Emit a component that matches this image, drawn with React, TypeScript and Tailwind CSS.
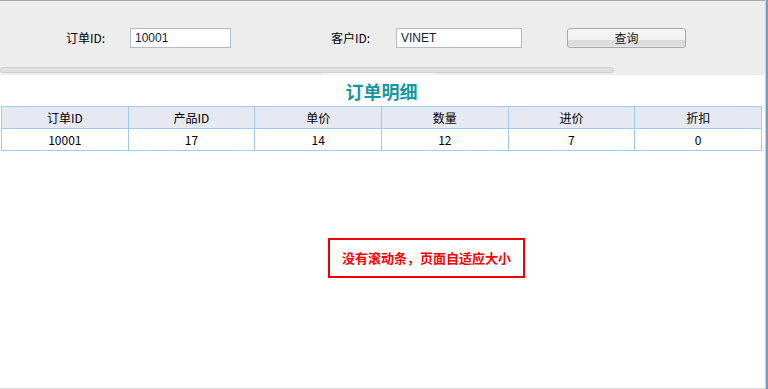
import React from "react";

const cjk = { fontFamily: '"Noto Sans CJK SC", "Noto Sans", sans-serif' };
const latin = { fontFamily: '"Liberation Sans", Arial, sans-serif' };

const headers = ["订单ID", "产品ID", "单价", "数量", "进价", "折扣"];
const row = ["10001", "17", "14", "12", "7", "0"];

export default function App() {
  return (
    <div className="w-[768px] h-[389px] overflow-hidden flex bg-white" style={cjk}>
      <div className="w-[765px] h-full flex flex-col">
        <div className="h-[1px] bg-[#a8a8a8]" />
        <div className="h-[74px] bg-[#ededed] flex flex-col">
          <div className="flex items-center h-[20px] mt-[27px]">
            <div className="ml-[66px] w-[64px] text-[12px] leading-none text-black">订单ID:</div>
            <div
              className="w-[101px] h-[20px] bg-white border border-[#b3b9cf] flex items-center pl-[4px] text-[12px] text-[#1a1a40]"
              style={latin}
            >
              10001
            </div>
            <div className="ml-[100px] w-[65px] text-[12px] leading-none text-black">客户ID:</div>
            <div
              className="w-[126px] h-[20px] bg-white border border-[#b3b9cf] flex items-center pl-[4px] text-[12px] text-[#1a1a40]"
              style={latin}
            >
              VINET
            </div>
            <div className="ml-[45px] w-[119px] h-[20px] rounded-[3px] border border-[#a9a9a9] bg-[linear-gradient(to_bottom,#f7f7f7_0%,#f2f2f2_60%,#dcdcdc_62%,#dcdcdc_90%,#ececec_100%)] flex items-center justify-center text-[12px] text-[#222]">
              查询
            </div>
          </div>
          <div className="mt-[19px] w-[614px] h-[6px] rounded-[3px] bg-[#e0e0e0] border border-[#cfcfcf]" />
          <div className="ml-[323px] w-[112px] h-[1px] bg-white mt-[0px]" />
        </div>
        <div className="flex-1 flex flex-col">
          <div className="w-[763px] mt-[4px] h-[24px] flex items-center justify-center text-[18px] font-bold text-[#1598a0] leading-none">
            订单明细
          </div>
          <table className="ml-[1px] mt-[3px] w-[761px] border-collapse table-fixed text-[12px] text-black">
            <thead>
              <tr className="h-[22px] bg-[#e6e9f1]">
                {headers.map((h) => (
                  <th key={h} className="border border-[#9fcbf5] font-normal text-center p-0 leading-none">
                    {h}
                  </th>
                ))}
              </tr>
            </thead>
            <tbody>
              <tr className="h-[22px]">
                {row.map((c, i) => (
                  <td key={i} className="border border-[#9fcbf5] text-center p-0 leading-none">
                    {c}
                  </td>
                ))}
              </tr>
            </tbody>
          </table>
          <div className="ml-[328px] mt-[87px] w-[197px] h-[40px] border-2 border-[#ee0000] flex items-center justify-center text-[13px] font-bold text-[#ff0000]">
            没有滚动条，页面自适应大小
          </div>
          <div className="flex-1" />
          <div className="h-[1px] bg-[#dcdcdc]" />
        </div>
      </div>
      <div className="w-[1px] h-full bg-[#d0d0d0]" />
      <div className="w-[2px] h-full bg-[#7b98c9]" />
    </div>
  );
}
